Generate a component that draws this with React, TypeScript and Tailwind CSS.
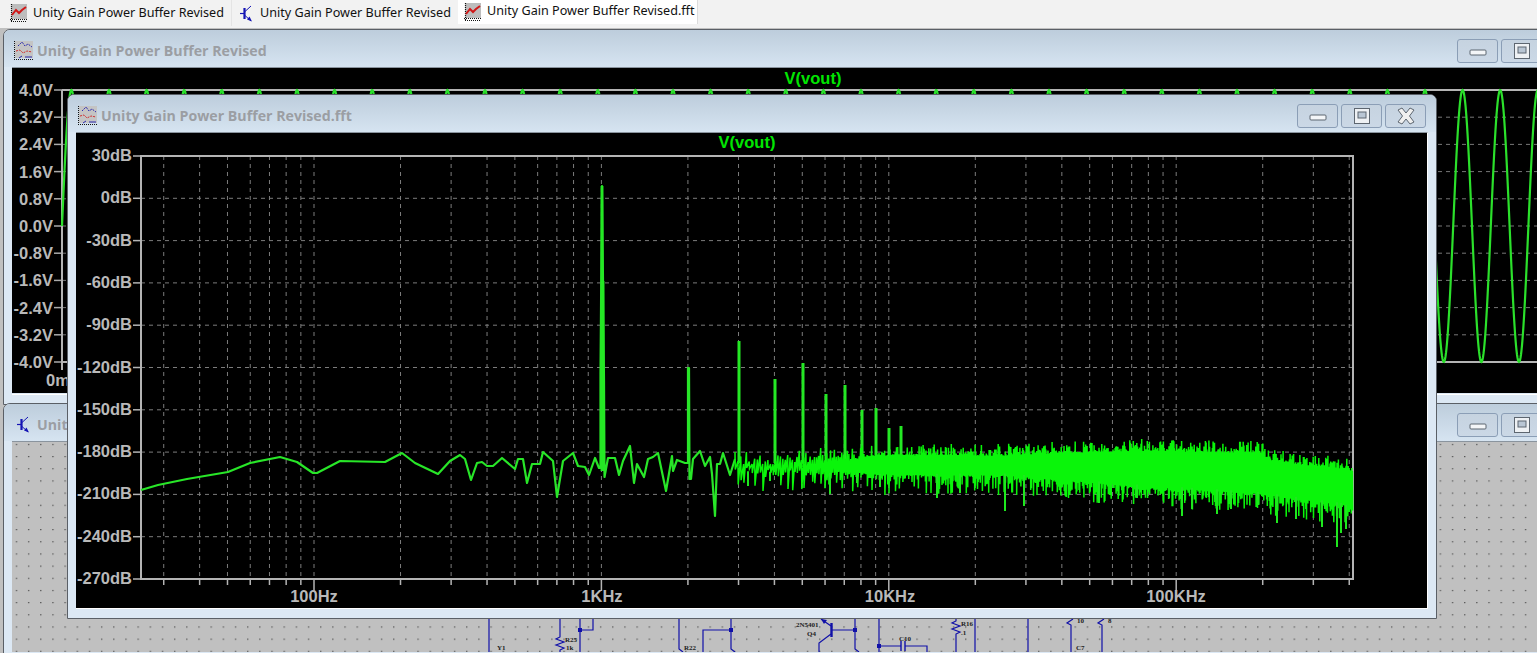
import React from 'react';

// log axis of the fft plot, in page pixels
const fx = (f: number) => 314 + 287.4 * Math.log10(f / 100);

const dbTicks = [30, 0, -30, -60, -90, -120, -150, -180, -210, -240, -270];
const voltTicks = ['4.0V', '3.2V', '2.4V', '1.6V', '0.8V', '0.0V', '-0.8V', '-1.6V', '-2.4V', '-3.2V', '-4.0V'];
const gridFreqs = [30, 40, 50, 60, 70, 80, 90].concat(
  [100, 1000, 10000].flatMap((d) => [1, 2, 3, 4, 5, 6, 7, 8, 9].map((m) => m * d)),
  [100000, 200000, 300000, 400000],
);

// traced by hand from the low frequency end of the trace
const lowTrace: [number, number][] = [
  [141, 489], [158, 484], [187, 478], [228, 471], [250, 462], [280, 456], [297, 461], [313, 472], [317, 472],
  [340, 460], [385, 461], [402, 452], [415, 462], [438, 473], [450, 460], [460, 454], [465, 458], [471, 479],
  [477, 462], [482, 461], [487, 465], [493, 465], [502, 457], [515, 468], [518, 458], [523, 458], [527, 482],
  [532, 463], [540, 463], [543, 451], [553, 460], [557, 496], [563, 460], [573, 452], [578, 465], [585, 466],
  [589, 474], [595, 457], [599, 467], [600.5, 467], [600.5, 373], [602, 185], [603, 280], [604, 380], [604.5, 476], [608, 457],
  [615, 457], [619, 474], [623, 460], [630, 445], [634, 482], [637, 463], [644, 476], [648, 458], [653, 456],
  [658, 452], [666, 490], [672, 455], [673, 470], [677, 459], [685, 462], [688, 462], [688, 367], [689, 367], [689.5, 478], [691, 478],
  [693, 458], [700, 450], [705, 465], [710, 456], [712, 473], [715, 515], [717, 463], [720, 463], [723, 452],
  [730, 474], [735, 458],
];

const harmonics: [number, number][] = [
  [739, 340], [775, 378], [803, 362], [826, 393], [845, 384], [862, 409], [876, 407], [889, 427], [901, 425],
];

const deepSpikes: [number, number][] = [
  [748, 485], [770, 480], [830, 493], [857, 482], [880, 486], [937, 497], [960, 492], [1005, 510], [1024, 505],
  [1099, 502], [1137, 497], [1182, 515], [1192, 508], [1217, 513], [1231, 508], [1258, 504], [1277, 522],
  [1296, 518], [1322, 526], [1337, 546], [1341, 532], [1346, 528],
];

const topCore: [number, number][] = [[735, 458], [900, 453], [1000, 455], [1057, 452], [1143, 450], [1263, 452], [1268, 460], [1343, 468], [1353, 470]];
const botCore: [number, number][] = [[735, 472], [900, 475], [1000, 474], [1130, 485], [1260, 493], [1343, 504], [1353, 510]];

const interp = (table: [number, number][], x: number) => {
  for (let i = 1; i < table.length; i++) {
    if (x <= table[i][0]) {
      const [x0, y0] = table[i - 1];
      const [x1, y1] = table[i];
      return y0 + ((y1 - y0) * (x - x0)) / (x1 - x0);
    }
  }
  return table[table.length - 1][1];
};

// the noise floor only has to look right, so a seeded generator is enough
const buildNoise = () => {
  let seed = 20240611;
  const rnd = () => {
    seed = (seed + 0x6d2b79f5) | 0;
    let t = Math.imul(seed ^ (seed >>> 15), 1 | seed);
    t = (t + Math.imul(t ^ (t >>> 7), 61 | t)) ^ t;
    return ((t ^ (t >>> 14)) >>> 0) / 4294967296;
  };
  let d = 'M735 460';
  let x = 735;
  while (x < 1353) {
    const sparse = x < 950 ? (950 - x) / 215 : 0;
    const top = interp(topCore, x) - Math.pow(rnd(), 3) * 12 + rnd() * sparse * 8;
    const bot = interp(botCore, x) + Math.pow(rnd(), 3) * 20 - rnd() * sparse * 6;
    d += `L${x.toFixed(1)} ${top.toFixed(1)}L${(x + 0.3).toFixed(1)} ${bot.toFixed(1)}`;
    x += 0.7 + sparse * 2.2;
  }
  return d;
};

const noisePath = buildNoise();
const lowPath = 'M' + lowTrace.map((p) => p.join(' ')).join('L');

const buildSine = () => {
  let d = 'M62 226';
  for (let x = 62.5; x < 1540; x += 0.5) {
    const y = 226 - 136 * Math.sin((2 * Math.PI * (x - 62)) / 37.6);
    d += `L${x} ${y.toFixed(1)}`;
  }
  return d;
};
const sinePath = buildSine();

const PlotIcon = () => (
  <svg width="19" height="19" viewBox="0 0 19 19" className="shrink-0">
    <rect x="1" width="18" height="17" fill="#c4c4c4" />
    <path d="M0.5 0V19M0 18.5H19" stroke="#111" strokeWidth="1" strokeDasharray="1 1" />
    <path d="M4 5L8 1L11 5L14 3L18 6" stroke="#2b2bb0" strokeWidth="1" fill="none" strokeDasharray="2 1" />
    <path d="M2 10L6 9L9 12L13 10L18 11" stroke="#d03030" strokeWidth="1" fill="none" strokeDasharray="2 1" />
    <path d="M5 17L8 15M11 16H18" stroke="#2b2bb0" strokeWidth="1" fill="none" />
  </svg>
);

const TabPlotIcon = () => (
  <svg width="17" height="18" viewBox="0 0 17 18" className="shrink-0">
    <rect x="1" width="16" height="15" fill="#bdbdbd" />
    <path d="M1.5 0V18M0 15.5H17" stroke="#111" strokeWidth="1.2" strokeDasharray="1 1" />
    <path d="M2 11L6 6L9 9L12 6L16 3" stroke="#d01818" strokeWidth="2" fill="none" />
    <path d="M1 17.5H17" stroke="#111" strokeWidth="1.2" strokeDasharray="1 1" />
  </svg>
);

const TransistorIcon = () => (
  <svg width="15" height="17" viewBox="0 0 15 17" className="shrink-0">
    <path d="M1 8.5H5" stroke="#1414b4" strokeWidth="1.2" fill="none" />
    <path d="M5.5 3V14" stroke="#1414b4" strokeWidth="2.2" fill="none" />
    <path d="M6 6.5L12 1M6 10.5L12 16" stroke="#1414b4" strokeWidth="1" fill="none" />
    <path d="M13 16.5L8 14.5L10.5 11.5Z" fill="#1414b4" />
  </svg>
);

const CaptionButton = ({ kind }: { kind: 'min' | 'max' | 'close' }) => (
  <div className="flex h-[24px] w-[41px] shrink-0 items-center justify-center rounded-[3px] border border-[#8b9eb6] bg-gradient-to-b from-[#c6d3e0] to-[#cbd8e6]">
    <svg width="20" height="18" viewBox="0 0 20 18">
      {kind === 'min' && <rect x="2" y="8" width="16" height="5" rx="1" fill="#f4f6f8" stroke="#5d6670" />}
      {kind === 'max' && (
        <>
          <rect x="2.5" y="1.5" width="15" height="15" fill="#eef1f4" stroke="#5d6670" />
          <rect x="6" y="5" width="8" height="6" fill="#b9c6d4" stroke="#5d6670" />
        </>
      )}
      {kind === 'close' && (
        <path
          d="M2 3L6 1L10 6L14 1L18 3L13.5 9L18 15L14 17L10 12L6 17L2 15L6.5 9Z"
          fill="#f0f0f0"
          stroke="#5d6670"
          strokeLinejoin="round"
        />
      )}
    </svg>
  </div>
);

type WindowProps = {
  className: string;
  title: string;
  icon: React.ReactNode;
  children: React.ReactNode;
};

const MdiWindow = ({ className, title, icon, children }: WindowProps) => (
  <div className={`absolute flex flex-col rounded-t-[7px] border border-[#5a5f66] bg-[#dce8f4] px-[8px] pb-[9px] ${className}`}>
    <div className="-mx-[8px] flex h-[37px] shrink-0 items-center rounded-t-[6px] bg-gradient-to-b from-[#bdcddc] to-[#d6e4f1] pl-[10px] pr-[10px] pt-[4px]">
      <div className="flex w-[19px] shrink-0 justify-center">{icon}</div>
      <span className="ml-[4px] whitespace-nowrap pt-[1px] font-['Open_Sans',sans-serif] text-[14.2px] font-bold text-[#9b9ea3]">
        {title}
      </span>
      <div className="ml-auto flex gap-[3px]">
        <CaptionButton kind="min" />
        <CaptionButton kind="max" />
        <CaptionButton kind="close" />
      </div>
    </div>
    <div className="min-h-0 flex-1 overflow-hidden border-b border-r border-t border-b-white border-r-white border-t-[#8a949e]">
      {children}
    </div>
  </div>
);

const axisText = "fill-[#b9b9b9] font-['Liberation_Sans',sans-serif] text-[16.5px] font-bold";
const greenText = "fill-[#00e600] font-['Liberation_Sans',sans-serif] text-[16.5px] font-bold";

const TimePlot = () => (
  <svg width="1590" height="325" viewBox="12 68 1590 325" className="block bg-black">
    <text x="813" y="84" textAnchor="middle" className={greenText}>V(vout)</text>
    {voltTicks.map((label, i) => {
      const y = 90 + i * 27.2;
      return (
        <g key={label}>
          <line x1="54" x2="62" y1={y} y2={y} stroke="#aaa" strokeWidth="1.5" />
          {i > 0 && i < 10 && <line x1="62" x2="1600" y1={y} y2={y} stroke="#777" strokeDasharray="4 4" />}
          <text x="53" y={y + 6} textAnchor="end" className={axisText}>{label}</text>
        </g>
      );
    })}
    <path d="M62 90H1600M62 362H1600M62 90V370" stroke="#b4b4b4" strokeWidth="2" fill="none" />
    <text x="46" y="386" className={axisText}>0ms</text>
    <path d={sinePath} stroke="#2be02b" strokeWidth="2.2" fill="none" />
  </svg>
);

const Part = ({ x, y, children }: { x: number; y: number; children: React.ReactNode }) => (
  <text x={x} y={y} className="fill-[#222] font-['Liberation_Serif',serif] text-[7px] font-bold">{children}</text>
);

const Schematic = () => (
  <svg width="1590" height="210" viewBox="12 443 1590 210" className="block bg-[#c0c0c0]">
    <defs>
      <pattern id="dots" x="12" y="443" width="12.17" height="12.17" patternUnits="userSpaceOnUse">
        <rect x="4" y="2" width="1" height="1" fill="#111" />
      </pattern>
    </defs>
    <rect x="12" y="443" width="1590" height="210" fill="url(#dots)" />
    <g stroke="#1010a8" strokeWidth="1.2" fill="none">
      <path d="M489 610V653" />
      <path d="M560 610V638L556 640L564 643L556 646L564 649L560 651V653" />
      <path d="M580 610V653M593 610V631H580" />
      <path d="M679 610V650L683 653" />
      <path d="M731 610V650L735 653M731 631H703V653" />
      <path d="M821 620L831 627M831 635L819 644V653" />
      <path d="M831 631H855M855 610V650L859 653" strokeWidth="1.2" />
      <path d="M831.5 624V638" strokeWidth="2.4" />
      <path d="M879 610V653M879 647H901M905 647H927V653" />
      <path d="M901 642V652M905 642V652" strokeWidth="1.4" />
      <path d="M956 610V622L952 624L960 627L952 630L960 633L956 635V653" />
      <path d="M975 610V653M1028 610V653" />
      <path d="M1071 653V626L1067 624L1073 620" />
      <path d="M1102 653V626L1098 624L1104 620" />
    </g>
    <path d="M821 620L827 621L824 625Z" fill="#1010a8" />
    <g fill="#1010a8">
      <rect x="578" y="629" width="4" height="4" />
      <rect x="729" y="629" width="4" height="4" />
      <rect x="853" y="629" width="4" height="4" />
      <rect x="877" y="645" width="4" height="4" />
    </g>
    <Part x={497} y={651}>Y1</Part>
    <Part x={565} y={643}>R25</Part>
    <Part x={566} y={651}>1k</Part>
    <Part x={684} y={651}>R22</Part>
    <Part x={796} y={628}>2N5401</Part>
    <Part x={807} y={637}>Q4</Part>
    <Part x={899} y={642}>C10</Part>
    <Part x={961} y={627}>R16</Part>
    <Part x={961} y={636}>.1</Part>
    <Part x={1076} y={651}>C7</Part>
    <Part x={1077} y={624}>10</Part>
    <Part x={1108} y={624}>8</Part>
  </svg>
);

const FftPlot = () => (
  <svg width="1351" height="476" viewBox="76 132 1351 476" className="block bg-black">
    <text x="747" y="147" textAnchor="middle" className={greenText}>V(vout)</text>
    {dbTicks.map((db, i) => {
      const y = 155 + i * 42.3;
      return (
        <g key={db}>
          <line x1="133" x2="141" y1={y} y2={y} stroke="#b4b4b4" strokeWidth="1.5" />
          {i > 0 && i < 10 && <line x1="141" x2="1353" y1={y} y2={y} stroke="#7c7c7c" strokeDasharray="4 4" />}
          <text x="132" y={y + 5} textAnchor="end" className={axisText}>{db}dB</text>
        </g>
      );
    })}
    {gridFreqs.map((f) => {
      const x = fx(f);
      const decade = [100, 1000, 10000, 100000].includes(f);
      return (
        <g key={f}>
          <line x1={x} x2={x} y1="155" y2="578" stroke="#7c7c7c" strokeDasharray="4 4" />
          <line x1={x} x2={x} y1="578" y2={decade ? 590 : 584} stroke="#b4b4b4" strokeWidth="1.5" />
        </g>
      );
    })}
    <rect x="141" y="155" width="1212" height="423" fill="none" stroke="#b4b4b4" strokeWidth="2" />
    {[['100Hz', 314], ['1KHz', 602], ['10KHz', 890], ['100KHz', 1176]].map(([label, x]) => (
      <text key={label} x={x} y="601" textAnchor="middle" className={axisText}>{label}</text>
    ))}
    <path d={lowPath} stroke="#28e628" strokeWidth="2.2" fill="none" strokeLinejoin="round" />
    <path d="M602 470V185M603 470V280" stroke="#24e824" strokeWidth="2.8" fill="none" />
    {harmonics.map(([x, y]) => (
      <line key={x} x1={x} x2={x} y1="462" y2={y} stroke="#24e824" strokeWidth="3" />
    ))}
    <path d={noisePath} stroke="#0af50a" strokeWidth="1.5" fill="none" />
    {deepSpikes.map(([x, y]) => (
      <line key={x} x1={x} x2={x} y1={interp(botCore, x) - 2} y2={y} stroke="#1ee81e" strokeWidth="2" />
    ))}
  </svg>
);

const Tab = ({ className, active, icon, label }: { className: string; active?: boolean; icon: React.ReactNode; label: string }) => (
  <div
    className={`flex shrink-0 gap-[6px] font-['Noto_Sans',sans-serif] text-[12.6px] text-[#111] ${
      active ? 'h-[24px] items-start bg-white pt-[3px]' : 'h-[26px] items-center'
    } ${className}`}
  >
    {icon}
    <span className={`whitespace-nowrap ${active ? '-mt-[1px]' : ''}`}>{label}</span>
  </div>
);

const App: React.FC = () => {
  return (
    <div className="flex h-[653px] w-[1537px] flex-col overflow-hidden bg-[#c0c0c0]">
      <div className="flex h-[28px] shrink-0 items-start bg-[#f2f2f2]">
        <Tab className="w-[232px] border-r border-[#e4e4e4] pl-[10px]" icon={<TabPlotIcon />} label="Unity Gain Power Buffer Revised" />
        <Tab className="w-[226px] pl-[7px]" icon={<TransistorIcon />} label="Unity Gain Power Buffer Revised" />
        <Tab className="w-[240px] border-r border-[#dcdcdc] pl-[6px]" active icon={<TabPlotIcon />} label="Unity Gain Power Buffer Revised.fft" />
      </div>
      <div className="relative flex-1">
        <MdiWindow
          className="left-[3px] top-[1px] h-[376px] w-[1594px]"
          title="Unity Gain Power Buffer Revised"
          icon={<PlotIcon />}
        >
          <TimePlot />
        </MdiWindow>
        <MdiWindow
          className="left-[3px] top-[375px] h-[300px] w-[1594px]"
          title="Unity Gain Power Buffer Revised"
          icon={<TransistorIcon />}
        >
          <Schematic />
        </MdiWindow>
        <MdiWindow
          className="left-[67px] top-[66px] h-[525px] w-[1370px]"
          title="Unity Gain Power Buffer Revised.fft"
          icon={<PlotIcon />}
        >
          <FftPlot />
        </MdiWindow>
      </div>
    </div>
  );
};

export default App;
